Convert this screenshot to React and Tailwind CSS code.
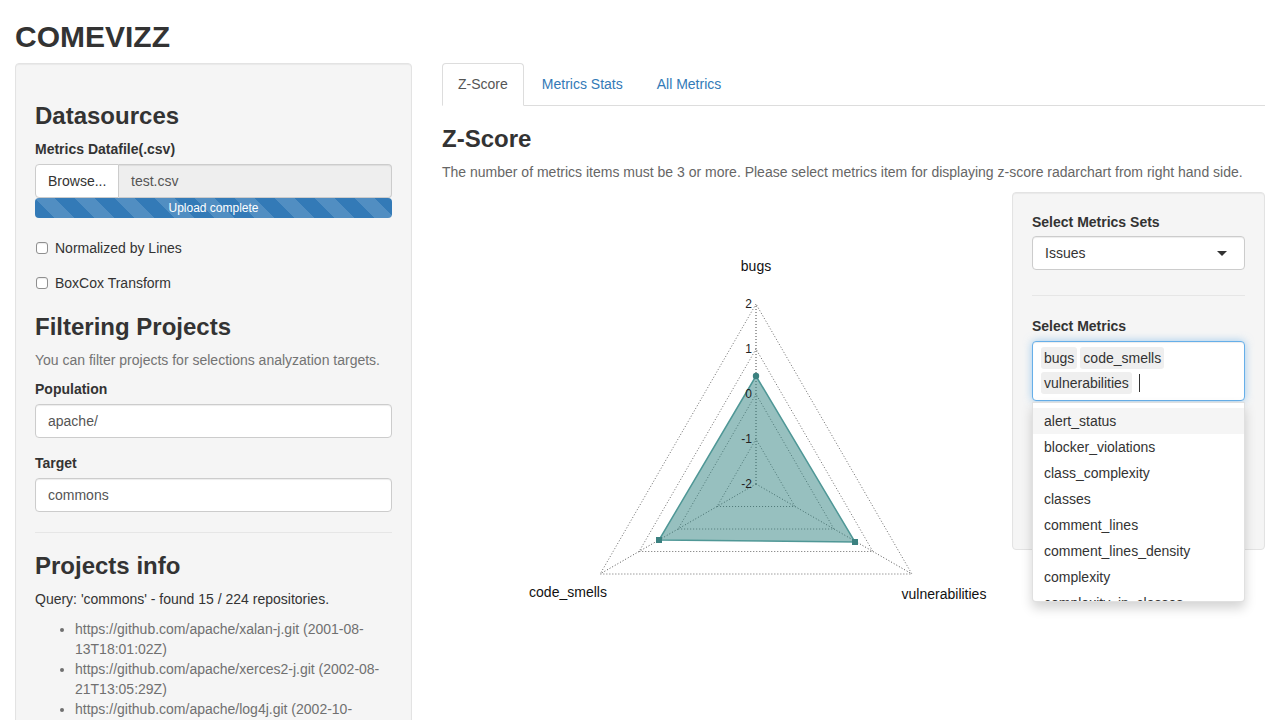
import React from 'react';

const metricOptions = [
  'alert_status',
  'blocker_violations',
  'class_complexity',
  'classes',
  'comment_lines',
  'comment_lines_density',
  'complexity',
  'complexity_in_classes',
];

const projects = [
  'https://github.com/apache/xalan-j.git (2001-08-13T18:01:02Z)',
  'https://github.com/apache/xerces2-j.git (2002-08-21T13:05:29Z)',
  'https://github.com/apache/log4j.git (2002-10-09T15:43:48Z)',
];

// radar geometry in page coordinates
const CX = 756;
const CY = 483;
const STEP = 45;

const ringPoints = (k) => {
  const r = STEP * k;
  const dx = r * 0.866;
  return `${CX},${CY - r} ${CX - dx},${CY + r / 2} ${CX + dx},${CY + r / 2}`;
};

const RadarChart = () => (
  <svg width="560" height="440" viewBox="442 191 560 440" className="block">
    {[1, 2, 3, 4].map((k) => (
      <polygon
        key={k}
        points={ringPoints(k)}
        fill="none"
        stroke="#6b6b6b"
        strokeWidth="1"
        strokeDasharray="1 2"
      />
    ))}
    <line x1={CX} y1={CY} x2={CX} y2={CY - 180} stroke="#444" strokeDasharray="1 2" />
    <line x1={CX} y1={CY} x2={CX - 156} y2={CY + 90} stroke="#555" strokeDasharray="1 2" />
    <line x1={CX} y1={CY} x2={CX + 156} y2={CY + 90} stroke="#555" strokeDasharray="1 2" />

    <polygon
      points="756,375 659,539 855,541"
      fill="rgba(48,130,128,0.5)"
      stroke="#4f9796"
      strokeWidth="1.5"
    />
    <circle cx="756" cy="375" r="3.2" fill="#3b8180" />
    <rect x="656" y="536" width="6" height="6" fill="#3b8180" />
    <rect x="852" y="538" width="6" height="6" fill="#3b8180" />

    {[
      ['2', 303],
      ['1', 348],
      ['0', 393],
      ['-1', 438],
      ['-2', 483],
    ].map(([t, y]) => (
      <text key={t} x="752" y={y + 4} textAnchor="end" fontSize="12" fill="#222" fontFamily="Liberation Sans, Arial, sans-serif">
        {t}
      </text>
    ))}

    <text x="756" y="270" textAnchor="middle" fontSize="14" fill="#111" fontFamily="Liberation Sans, Arial, sans-serif">bugs</text>
    <text x="568" y="596" textAnchor="middle" fontSize="14" fill="#111" fontFamily="Liberation Sans, Arial, sans-serif">code_smells</text>
    <text x="944" y="598" textAnchor="middle" fontSize="14" fill="#111" fontFamily="Liberation Sans, Arial, sans-serif">vulnerabilities</text>
  </svg>
);

const Checkbox = ({ label, className }) => (
  <label className={`flex items-center h-[20px] ${className}`}>
    <span className="ml-[1px] w-[12px] h-[12px] rounded-[3px] border border-[#8f8f8f] bg-white shadow-[inset_0_1px_1px_rgba(0,0,0,0.08)]" />
    <span className="ml-[7px]">{label}</span>
  </label>
);

const TextInput = ({ value }) => (
  <div className="h-[34px] flex items-center px-[12px] bg-white border border-[#ccc] rounded-[4px] shadow-[inset_0_1px_1px_rgba(0,0,0,0.075)] text-[#555]">
    {value}
  </div>
);

const Chip = ({ children }) => (
  <span className="mr-[3px] mb-[3px] px-[3px] py-[1px] leading-[20px] bg-[#efefef] rounded-[3px] text-[#333]">
    {children}
  </span>
);

const Sidebar = () => (
  <div className="w-[397px] shrink-0 bg-[#f5f5f5] border border-[#e3e3e3] rounded-[4px] p-[19px] shadow-[inset_0_1px_1px_rgba(0,0,0,0.05)]">
    <h3 className="mt-[20px] mb-[10px] text-[24px] leading-[26px] font-bold text-[#333]">Datasources</h3>
    <div className="font-bold leading-[20px] mb-[5px]">Metrics Datafile(.csv)</div>
    <div className="flex h-[34px]">
      <div className="w-[84px] flex items-center px-[12px] bg-white border border-[#ccc] rounded-l-[4px]">Browse...</div>
      <div className="flex-1 flex items-center px-[12px] bg-[#eee] border border-l-0 border-[#ccc] rounded-r-[4px] text-[#555] shadow-[inset_0_1px_1px_rgba(0,0,0,0.075)]">test.csv</div>
    </div>
    <div className="h-[20px] mb-[20px] rounded-[4px] bg-[#337ab7] bg-[linear-gradient(45deg,rgba(255,255,255,.15)_25%,transparent_25%,transparent_50%,rgba(255,255,255,.15)_50%,rgba(255,255,255,.15)_75%,transparent_75%,transparent)] bg-[length:40px_40px] text-white text-[12px] leading-[20px] text-center">
      Upload complete
    </div>
    <Checkbox label="Normalized by Lines" className="mb-[15px]" />
    <Checkbox label="BoxCox Transform" />

    <h3 className="mt-[21px] mb-[10px] text-[24px] leading-[26px] font-bold text-[#333]">Filtering Projects</h3>
    <p className="mb-[9px] leading-[20px] text-[#737373]">You can filter projects for selections analyzation targets.</p>
    <div className="font-bold leading-[20px] mb-[5px]">Population</div>
    <TextInput value="apache/" />
    <div className="mt-[15px] font-bold leading-[20px] mb-[5px]">Target</div>
    <TextInput value="commons" />
    <hr className="mt-[20px] mb-[20px] border-0 border-t border-[#e6e6e6]" />

    <h3 className="mb-[10px] text-[24px] leading-[26px] font-bold text-[#333]">Projects info</h3>
    <p className="mb-[10px] leading-[20px]">Query: 'commons' - found 15 / 224 repositories.</p>
    <ul className="pl-[40px] list-disc text-[#707070] leading-[20px]">
      {projects.map((p) => (
        <li key={p}>{p}</li>
      ))}
    </ul>
  </div>
);

const MetricsPanel = () => (
  <div className="relative w-[253px] h-[358px] shrink-0 bg-[#f5f5f5] border border-[#e3e3e3] rounded-[4px] p-[19px] shadow-[inset_0_1px_1px_rgba(0,0,0,0.05)]">
    <div className="font-bold leading-[20px] mb-[4px]">Select Metrics Sets</div>
    <div className="h-[34px] flex items-center justify-between pl-[12px] pr-[17px] bg-white border border-[#ccc] rounded-[4px] shadow-[inset_0_1px_1px_rgba(0,0,0,0.075)]">
      <span>Issues</span>
      <span className="w-0 h-0 border-t-[5px] border-x-[5px] border-x-transparent border-t-[#333]" />
    </div>
    <hr className="mt-[25px] mb-[20px] border-0 border-t border-[#e6e6e6]" />
    <div className="font-bold leading-[20px] mb-[5px]">Select Metrics</div>
    <div className="relative">
      <div className="h-[60px] flex flex-wrap content-start pl-[8px] pr-[12px] pt-[5px] bg-white border border-[#66afe9] rounded-[4px] shadow-[inset_0_1px_1px_rgba(0,0,0,0.075),0_0_8px_rgba(102,175,233,0.6)]">
        <Chip>bugs</Chip>
        <Chip>code_smells</Chip>
        <Chip>vulnerabilities</Chip>
        <span className="ml-[4px] mt-[2px] w-px h-[18px] bg-[#333]" />
      </div>
      <div className="absolute left-0 right-0 top-[61px] z-10 h-[200px] overflow-hidden py-[5px] bg-white border border-[rgba(0,0,0,0.12)] rounded-b-[4px] shadow-[0_6px_12px_rgba(0,0,0,0.175)]">
        {metricOptions.map((m, i) => (
          <div key={m} className={`px-[11px] py-[3px] leading-[20px] text-[#333] ${i === 0 ? 'bg-[#f5f5f5]' : ''}`}>
            {m}
          </div>
        ))}
      </div>
    </div>
  </div>
);

const App = () => {
  return (
    <div className="min-h-screen bg-white px-[15px] text-[14px] leading-[20px] text-[#333] font-['Liberation_Sans',Arial,sans-serif] overflow-hidden">
      <h2 className="pt-[20px] mb-[10px] text-[30px] leading-[33px] font-bold">COMEVIZZ</h2>
      <div className="flex gap-[30px]">
        <Sidebar />
        <div className="flex-1 min-w-0">
          <ul className="flex border-b border-[#ddd]">
            <li className="-mb-px mr-[2px] px-[15px] py-[10px] leading-[20px] bg-white border border-[#ddd] border-b-transparent rounded-t-[4px] text-[#555]">
              Z-Score
            </li>
            <li className="mr-[2px] px-[15px] py-[10px] leading-[20px] border border-transparent text-[#337ab7]">
              Metrics Stats
            </li>
            <li className="mr-[2px] px-[15px] py-[10px] leading-[20px] border border-transparent text-[#337ab7]">
              All Metrics
            </li>
          </ul>
          <h3 className="mt-[20px] mb-[10px] text-[24px] leading-[26px] font-bold">Z-Score</h3>
          <p className="mb-[10px] leading-[20px] text-[#666]">
            The number of metrics items must be 3 or more. Please select metrics item for displaying z-score radarchart from right hand side.
          </p>
          <div className="flex justify-between">
            <RadarChart />
            <MetricsPanel />
          </div>
        </div>
      </div>
    </div>
  );
};

export default App;
